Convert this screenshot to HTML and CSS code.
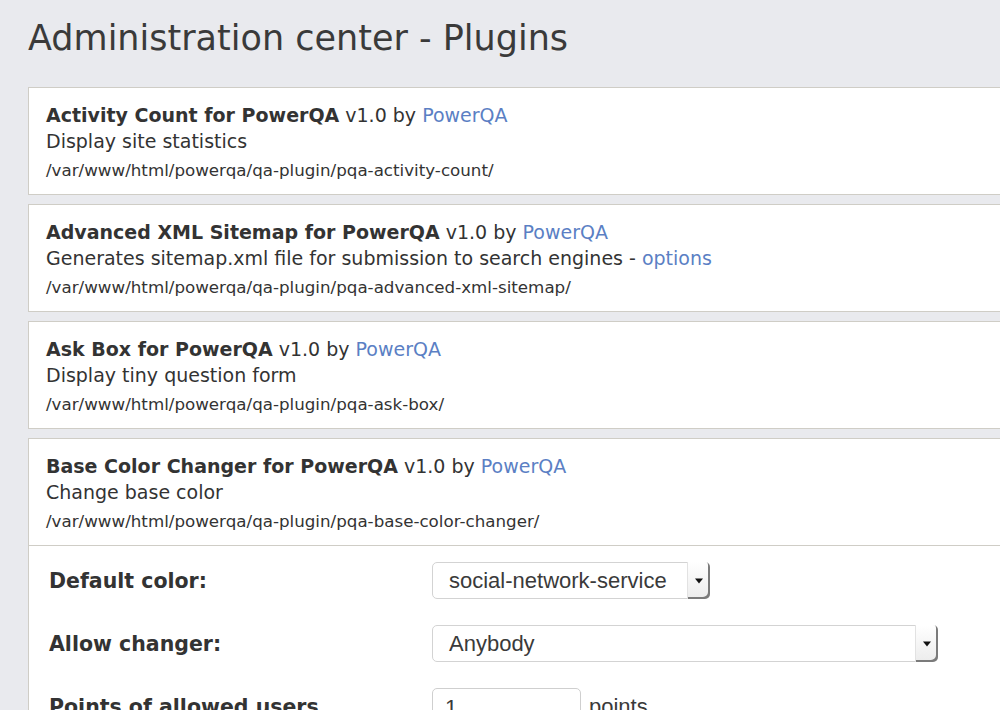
FILE: index.html
```html
<!DOCTYPE html>
<html>
<head>
<meta charset="utf-8">
<link rel="stylesheet" href="styles.css">
</head>
<body>
<div class="page">
  <h1 class="page-title">Administration center - Plugins</h1>
  <div class="plugin-list">
    <div class="plugin">
      <div class="plugin-info">
        <div class="plugin-head"><span class="plugin-name">Activity Count for PowerQA</span> v1.0 by <a class="link" href="#">PowerQA</a></div>
        <div class="plugin-desc">Display site statistics</div>
        <div class="plugin-path">/var/www/html/powerqa/qa-plugin/pqa-activity-count/</div>
      </div>
    </div>
    <div class="plugin">
      <div class="plugin-info">
        <div class="plugin-head"><span class="plugin-name">Advanced XML Sitemap for PowerQA</span> v1.0 by <a class="link" href="#">PowerQA</a></div>
        <div class="plugin-desc">Generates sitemap.xml file for submission to search engines - <a class="link" href="#">options</a></div>
        <div class="plugin-path">/var/www/html/powerqa/qa-plugin/pqa-advanced-xml-sitemap/</div>
      </div>
    </div>
    <div class="plugin">
      <div class="plugin-info">
        <div class="plugin-head"><span class="plugin-name">Ask Box for PowerQA</span> v1.0 by <a class="link" href="#">PowerQA</a></div>
        <div class="plugin-desc">Display tiny question form</div>
        <div class="plugin-path">/var/www/html/powerqa/qa-plugin/pqa-ask-box/</div>
      </div>
    </div>
    <div class="plugin">
      <div class="plugin-info">
        <div class="plugin-head"><span class="plugin-name">Base Color Changer for PowerQA</span> v1.0 by <a class="link" href="#">PowerQA</a></div>
        <div class="plugin-desc">Change base color</div>
        <div class="plugin-path">/var/www/html/powerqa/qa-plugin/pqa-base-color-changer/</div>
      </div>
      <div class="plugin-options">
        <div class="opt-row">
          <div class="opt-label">Default color:</div>
          <div class="opt-field">
            <div class="select-wrap select-short">
              <span class="select-value">social-network-service</span>
              <span class="select-btn"><svg width="10" height="6" viewBox="0 0 10 6"><path d="M1 0.5h8L5 5.5z" fill="#111"/></svg></span>
            </div>
          </div>
        </div>
        <div class="opt-row">
          <div class="opt-label">Allow changer:</div>
          <div class="opt-field">
            <div class="select-wrap select-long">
              <span class="select-value">Anybody</span>
              <span class="select-btn"><svg width="10" height="6" viewBox="0 0 10 6"><path d="M1 0.5h8L5 5.5z" fill="#111"/></svg></span>
            </div>
          </div>
        </div>
        <div class="opt-row">
          <div class="opt-label">Points of allowed users</div>
          <div class="opt-field">
            <div class="text-input">1</div>
            <span class="unit">points</span>
          </div>
        </div>
      </div>
    </div>
  </div>
</div>
</body>
</html>
```

FILE: styles.css
```css
html, body {
  margin: 0;
  padding: 0;
  overflow: hidden;
  background: #e9eaee;
}
body {
  font-family: "DejaVu Sans", Verdana, sans-serif;
  color: #333333;
}
.page {
  padding: 16px 0 0 28px;
  width: 1100px;
}
.page-title {
  margin: 0 0 27px 0;
  font-size: 35px;
  font-weight: normal;
  line-height: 44px;
  color: #3a3a3a;
}
.plugin-list {
  display: flex;
  flex-direction: column;
  gap: 9px;
}
.plugin {
  background: #ffffff;
  border: 1px solid #cfcdc6;
}
.plugin-info {
  padding: 14px 17px 12px 17px;
}
.plugin-head {
  font-size: 19px;
  line-height: 26px;
}
.plugin-name {
  font-weight: bold;
}
.plugin-desc {
  font-size: 19px;
  line-height: 26px;
}
.plugin-path {
  margin-top: 4px;
  font-size: 16.7px;
  line-height: 24px;
}
.link {
  color: #5b7fc4;
  text-decoration: none;
}
.plugin-options {
  border-top: 1px solid #cfcdc6;
  padding: 16px 0 0 20px;
  display: flex;
  flex-direction: column;
  gap: 26px;
}
.opt-row {
  display: flex;
  align-items: center;
  height: 37px;
}
.opt-label {
  width: 383px;
  font-size: 20.5px;
  font-weight: bold;
  color: #333;
}
.opt-field {
  display: flex;
  align-items: center;
  gap: 8px;
  font-family: "Liberation Sans", Arial, sans-serif;
  color: #3a3a3a;
}
.select-wrap {
  position: relative;
  box-sizing: border-box;
  height: 37px;
  border: 1px solid #d3d3d3;
  border-radius: 5px;
  background: #fff;
  display: flex;
  align-items: center;
  padding-left: 16px;
  font-size: 22px;
}
.select-short { width: 278px; }
.select-long { width: 506px; }
.select-btn {
  position: absolute;
  top: -1px;
  right: -1px;
  bottom: -1px;
  width: 22px;
  border-radius: 0 5px 5px 0;
  background: linear-gradient(#ffffff, #ececec);
  border-left: 1px solid #e2e2e2;
  box-shadow: inset -2px -2px 0 #7b7b7b;
  display: flex;
  align-items: center;
  justify-content: center;
}
.text-input {
  box-sizing: border-box;
  width: 149px;
  height: 37px;
  border: 1px solid #cfcfcf;
  border-radius: 5px;
  background: #fff;
  padding: 6px 0 0 12px;
  font-size: 22px;
}
.unit {
  font-size: 22px;
}
```
